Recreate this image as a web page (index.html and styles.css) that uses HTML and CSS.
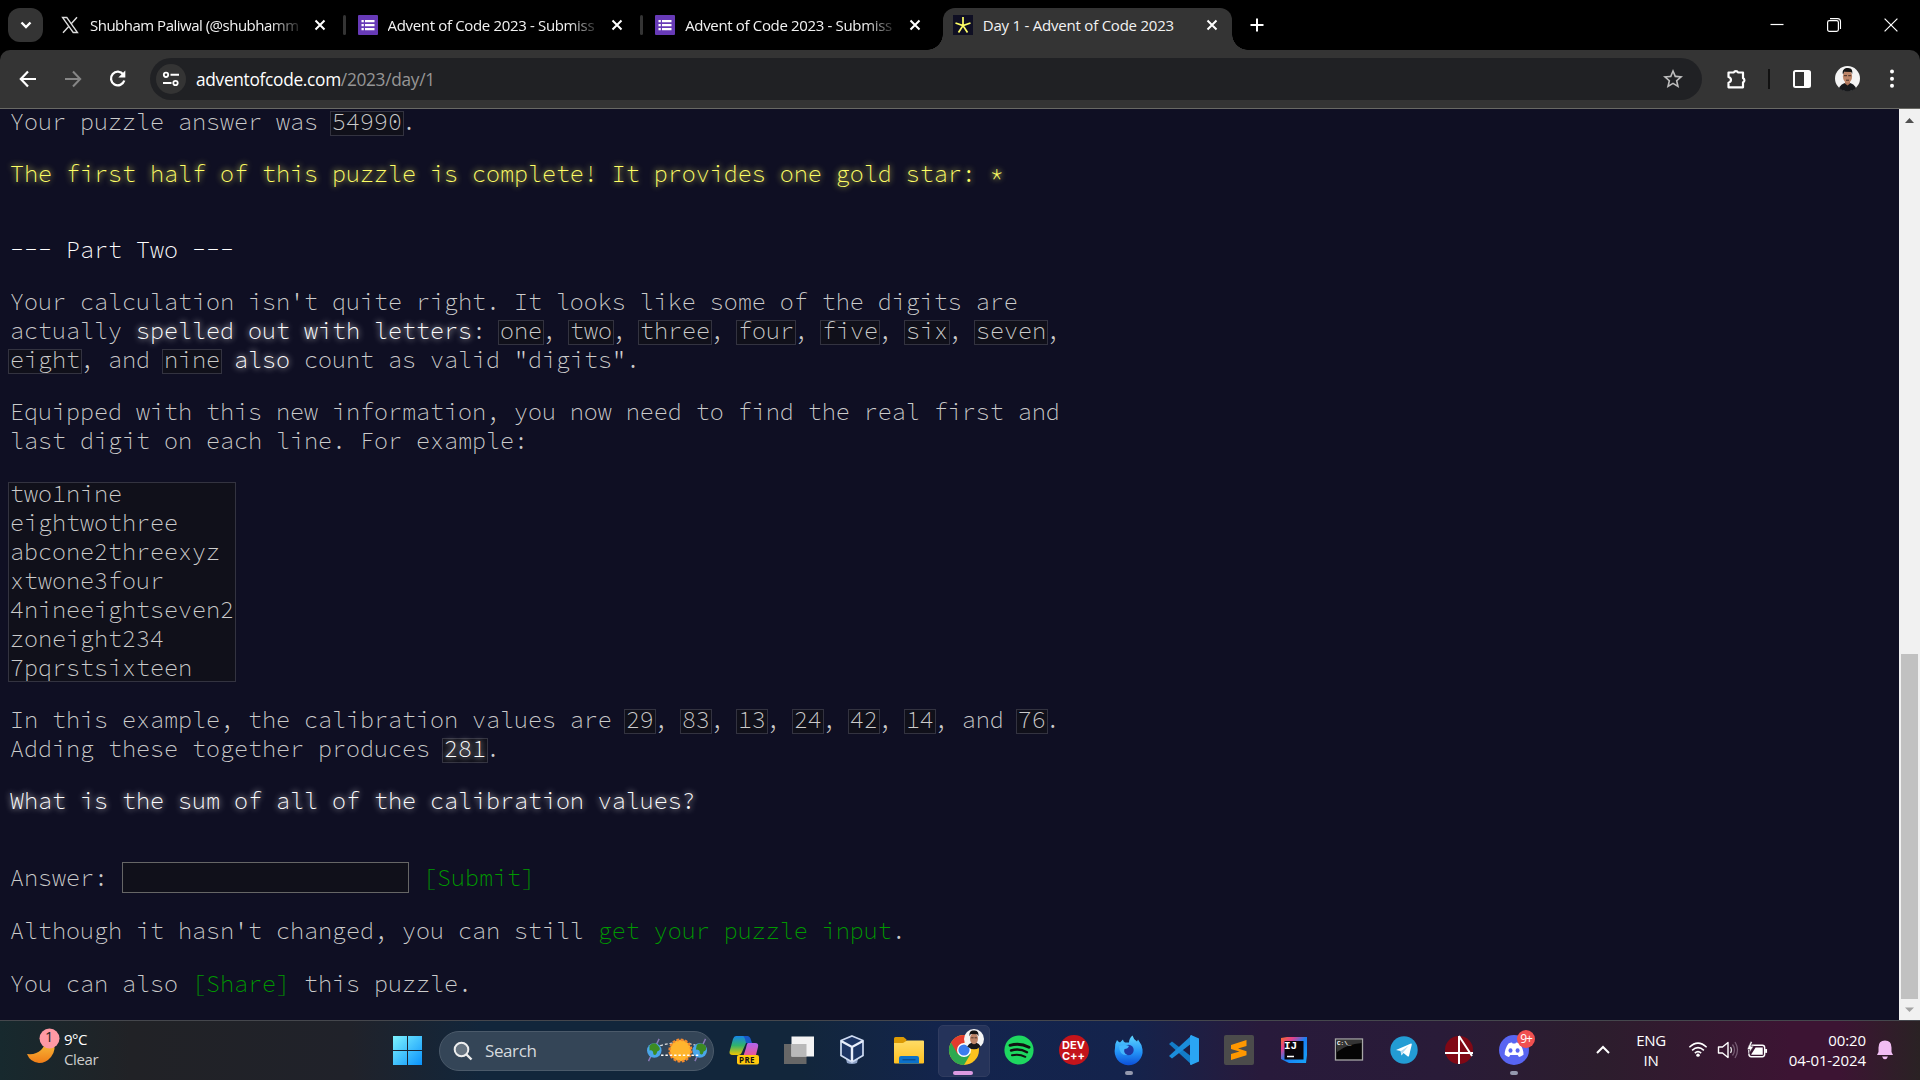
FILE: index.html
```html
<!DOCTYPE html>
<html lang="en">
<head>
<meta charset="utf-8">
<title>Day 1 - Advent of Code 2023</title>
<link rel="stylesheet" href="styles.css">
</head>
<body>
<header class="tabstrip">
  <button class="tab-search"><svg width="14" height="12" viewBox="0 0 14 12"><path d="M2.5 3.5 7 8l4.500-4.500" fill="none" stroke="#fff" stroke-width="2.400"/></svg></button>
  <div class="tab">
    <svg class="favicon" viewBox="0 0 20 20"><path d="M2.500 2.500h4.300l10.700 15h-4.300z" fill="none" stroke="#ddd" stroke-width="1.300"/><path d="M17 2.300 11 9M8.700 11.500 3 17.700" stroke="#ddd" stroke-width="1.400"/></svg>
    <span class="title fade tight">Shubham Paliwal (@shubhamm</span>
    <svg class="close" viewBox="0 0 12 12"><path d="M1.500 1.500l9 9M10.500 1.500l-9 9"/></svg>
  </div>
  <div class="tab sep">
    <svg class="favicon" viewBox="0 0 20 20"><rect width="20" height="20" rx="1" fill="#673ab7"/><path d="M3.500 5h2.300v2.300H3.500zM3.500 9h2.300v2.300H3.500zM3.500 13h2.300v2.300H3.500zM7 5h9.500v2.300H7zM7 9h9.500v2.300H7zM7 13h9.500v2.300H7z" fill="#fff"/></svg>
    <span class="title fade">Advent of Code 2023 - Submiss</span>
    <svg class="close" viewBox="0 0 12 12"><path d="M1.500 1.500l9 9M10.500 1.500l-9 9"/></svg>
  </div>
  <div class="tab sep">
    <svg class="favicon" viewBox="0 0 20 20"><rect width="20" height="20" rx="1" fill="#673ab7"/><path d="M3.500 5h2.300v2.300H3.500zM3.500 9h2.300v2.300H3.500zM3.500 13h2.300v2.300H3.500zM7 5h9.500v2.300H7zM7 9h9.500v2.300H7zM7 13h9.500v2.300H7z" fill="#fff"/></svg>
    <span class="title fade">Advent of Code 2023 - Submiss</span>
    <svg class="close" viewBox="0 0 12 12"><path d="M1.500 1.500l9 9M10.500 1.500l-9 9"/></svg>
  </div>
  <div class="tab active">
    <svg class="favicon" viewBox="0 0 20 20"><rect width="20" height="20" fill="#0f0f23"/><path d="M10 2v8.500M2.500 8 10 10.500 17.500 8M5.500 17.500 10 10.500l4.500 7" fill="none" stroke="#ffff66" stroke-width="1.700"/></svg>
    <span class="title wide">Day 1 - Advent of Code 2023</span>
    <svg class="close" viewBox="0 0 12 12"><path d="M1.500 1.500l9 9M10.500 1.500l-9 9"/></svg>
  </div>
  <svg class="newtab" width="14" height="14" viewBox="0 0 14 14"><path d="M7 .5v13M.5 7h13" stroke="#fff" stroke-width="2"/></svg>
  <div class="window-buttons">
    <svg viewBox="0 0 14 14"><path d="M.5 6.500h13" stroke="#fff" stroke-width="1.200"/></svg>
    <svg viewBox="0 0 14 14"><rect x=".6" y="2.600" width="10.800" height="10.800" rx="1.800" fill="none" stroke="#fff" stroke-width="1.200"/><path d="M3 .6h7.500a3 3 0 0 1 3 3V11" fill="none" stroke="#fff" stroke-width="1.100"/></svg>
    <svg viewBox="0 0 14 14"><path d="M.6.6l12.800 12.800M13.400.6.6 13.400" stroke="#fff" stroke-width="1.200"/></svg>
  </div>
</header>

<nav class="toolbar">
  <svg class="nav" viewBox="0 0 20 20"><path d="M18 10H3M10 2.500 2.800 10l7.200 7.500" fill="none" stroke="#fff" stroke-width="2.200"/></svg>
  <svg class="nav" viewBox="0 0 20 20"><path d="M2 10h15M10 2.500l7.200 7.500-7.200 7.500" fill="none" stroke="#868686" stroke-width="2"/></svg>
  <svg class="nav" viewBox="0 0 20 20"><path d="M15.300 5.500A6.800 6.800 0 1 0 16.300 11.500" fill="none" stroke="#fff" stroke-width="2.300"/><path d="M17.300 1.500v7h-7z" fill="#fff"/></svg>
  <div class="omnibox">
    <span class="site"><svg width="18" height="16" viewBox="0 0 18 16"><circle cx="4" cy="3.800" r="2.200" fill="none" stroke="#fff" stroke-width="1.800"/><circle cx="13.500" cy="12" r="2.200" fill="none" stroke="#fff" stroke-width="1.800"/><path d="M8.500 3.800H17M1 12h8.500" stroke="#fff" stroke-width="1.900"/></svg></span>
    <span class="url"><b>adventofcode.com</b>/2023/day/1</span>
    <svg class="star" viewBox="0 0 24 24"><path d="M22 9.240l-7.190-.62L12 2 9.190 8.630 2 9.240l5.460 4.730L5.820 21 12 17.270 18.180 21l-1.630-7.030zM12 15.400l-3.760 2.270 1-4.280-3.320-2.880 4.380-.38L12 6.100l1.710 4.040 4.380.38-3.320 2.880 1 4.280z" fill="#bdbdbd"/></svg>
  </div>
  <svg class="ext" viewBox="0 0 22 22"><path d="M2.500 4.500h5.300a2.200 1.900 0 0 1 4.200 0h5v5.600a2 2.200 0 0 1 0 4.200v5H2.500v-4.600c3.300-.8 3.300-4.900 0-5.700z" fill="none" stroke="#fff" stroke-width="2.200" stroke-linejoin="round"/></svg>
  <i class="divider"></i>
  <svg class="panel" viewBox="0 0 18 18"><rect x="1" y="1" width="16" height="16" rx="1.500" fill="none" stroke="#fff" stroke-width="2"/><path d="M11 1h6v16h-6z" fill="#fff"/></svg>
  <svg class="avatar" viewBox="0 0 25 25"><circle cx="12.500" cy="12.500" r="12.500" fill="#f4f4f4"/><path d="M4 22q2-4 6-5h5q4 1 6 5a12.500 12.500 0 0 1-17 0z" fill="#17191c"/><path d="M10 13h5v4.500l-2.500 2-2.500-2z" fill="#ad755c"/><ellipse cx="12.500" cy="10.500" rx="4.600" ry="6.300" fill="#bd8568"/><path d="M7.800 8C7 3.500 10 1.800 13 2c4 .3 4.700 2.500 4.200 6l-1-2-7-.3-.9 2.300z" fill="#141414"/><path d="M9 9.700h3M13.200 9.700h3M11 14.200h3" stroke="#35251f" stroke-width=".9"/></svg>
  <svg class="dots" viewBox="0 0 6 22"><circle cx="3" cy="3.500" r="2" fill="#fff"/><circle cx="3" cy="10.800" r="2" fill="#fff"/><circle cx="3" cy="17.800" r="2" fill="#fff"/></svg>
</nav>

<div class="viewport">
<main class="page">
<p>Your puzzle answer was <code>54990</code>.</p>
<p class="gold">The first half of this puzzle is complete! It provides one gold star: *</p>
<h2>--- Part Two ---</h2>
<p>Your calculation isn't quite right. It looks like some of the digits are<br>actually <em>spelled out with letters</em>: <code>one</code>, <code>two</code>, <code>three</code>, <code>four</code>, <code>five</code>, <code>six</code>, <code>seven</code>,<br><code>eight</code>, and <code>nine</code> <em>also</em> count as valid "digits".</p>
<p>Equipped with this new information, you now need to find the real first and<br>last digit on each line. For example:</p>
<pre><span>two1nine
eightwothree
abcone2threexyz
xtwone3four
4nineeightseven2
zoneight234
7pqrstsixteen</span></pre>
<p>In this example, the calibration values are <code>29</code>, <code>83</code>, <code>13</code>, <code>24</code>, <code>42</code>, <code>14</code>, and <code>76</code>.<br>Adding these together produces <code><em>281</em></code>.</p>
<p><em>What is the sum of all of the calibration values?</em></p>
<form class="answer"><label for="answer">Answer:</label><input id="answer" type="text"><a>[Submit]</a></form>
<p class="tail">Although it hasn't changed, you can still <a>get your puzzle input</a>.</p>
<p class="tail">You can also <a>[Share]</a> this puzzle.</p>
</main>
<aside class="scrollbar">
  <svg viewBox="0 0 21 21"><path d="M10.500 9l4.500 5H6z" fill="#505050"/></svg>
  <i class="thumb"></i>
  <svg class="down" viewBox="0 0 21 21"><path d="M10.500 13 15 8.500H6z" fill="#a3a3a3"/></svg>
</aside>
</div>

<footer class="taskbar">
  <div class="weather">
    <svg width="34" height="38" viewBox="0 0 34 38"><defs><linearGradient id="moon" x1="0" y1="0" x2="0" y2="1"><stop offset="0" stop-color="#f8c13c"/><stop offset="1" stop-color="#f07d18"/></linearGradient></defs><path d="M27 13q4 8-2 16-5 6-12 6Q4 34 1 26q9 1 14-4 4-4 4-9z" fill="url(#moon)"/><circle cx="23.500" cy="10.500" r="10" fill="#ff99a4"/></svg><b class="count">1</b>
    <div class="temp">9°C<br><span>Clear</span></div>
  </div>
  <svg class="start" viewBox="0 0 29 29"><defs><linearGradient id="win" x1="0" y1="0" x2="1" y2="1"><stop offset="0" stop-color="#7df3ff"/><stop offset="1" stop-color="#0a92fb"/></linearGradient></defs><path d="M0 0h14v14H0zM15 0h14v14H15zM0 15h14v14H0zM15 15h14v14H15z" fill="url(#win)"/></svg>
  <div class="search">
    <svg width="20" height="20" viewBox="0 0 20 20"><circle cx="8.500" cy="8.500" r="6.800" fill="#667380" stroke="#eee" stroke-width="2"/><path d="M13.500 13.500l5 5" stroke="#eee" stroke-width="2.400"/></svg>
    <span>Search</span>
    <svg class="earths" viewBox="0 0 64 30"><path d="M13 3 2 26M61 3 50 26" stroke="#8a79b8" stroke-width="1.500"/><path d="M14 10q20-6 38 0" fill="none" stroke="#ddd" stroke-width="1.200" stroke-dasharray="3 2"/><circle cx="8" cy="15" r="7.500" fill="#4aa6ea"/><circle cx="55" cy="15" r="7.500" fill="#4aa6ea"/><path d="M3 10q5-5 9 0 4 4-1 6-1 5-4 3 0-5-4-4zM52 9q5-3 9 1 2 5-2 6-1 5-4 2 1-4-4-4z" fill="#3d8b22"/><circle cx="35" cy="15" r="11" fill="#ffb52e"/><circle cx="35" cy="15" r="11.200" fill="none" stroke="#f48a2e" stroke-width="2.500" stroke-dasharray="2.800 1.600"/><path d="M15 20h40" stroke="#fff" stroke-width="1.500" stroke-dasharray="2.500 2"/></svg>
  </div>
  <div class="apps">
    <span class="app"><svg viewBox="0 0 30 30"><defs><linearGradient id="cpa" x1="0" y1="0" x2="0" y2="1"><stop offset="0" stop-color="#1686e8"/><stop offset=".5" stop-color="#31b36b"/><stop offset="1" stop-color="#f3c700"/></linearGradient><linearGradient id="cpb" x1="0" y1="0" x2="0" y2="1"><stop offset="0" stop-color="#b065f0"/><stop offset="1" stop-color="#f4558a"/></linearGradient></defs><path d="M7 1h10q3 0 4 4l1 3h-5l-4 9q-1 3-4 3H4q-5 0-3-5L4 4q1-3 3-3z" fill="url(#cpa)"/><path d="M14 1h4q3 0 4 4l1 3h-6l-1-4q-1-3-2-3z" fill="#1859c9"/><path d="M19 8h7q4 0 3 4l-2 8-7 2h-6l3-9q1-5 2-5z" fill="url(#cpb)"/><rect x="8" y="20" width="22" height="9.500" rx="2" fill="#ffc90e"/></svg><b class="pre">PRE</b></span>
    <span class="app"><svg viewBox="0 0 30 30"><rect x="0" y="9" width="22.500" height="20" fill="#676767"/><rect x="7.500" y="1.500" width="22.500" height="20" fill="#f3f3f3"/><path d="M7.500 9h15v12.500h-15z" fill="#b9b9b9"/></svg></span>
    <span class="app vbox"><svg viewBox="0 0 30 30"><path d="M9 24h12l-1 4q-5 2-10 0z" fill="#8fa3c8"/><path d="M15 1 26 5.500v15L15 27 4 20.500v-15z" fill="#1d3564" stroke="#cfdcf3" stroke-width="1.700"/><path d="M4 6l11 6 11-6M15 12v14" fill="none" stroke="#e8eefb" stroke-width="2.400"/></svg></span>
    <span class="app"><svg viewBox="0 0 30 30"><defs><linearGradient id="fold" x1="0" y1="0" x2="0" y2="1"><stop offset="0" stop-color="#ffdc66"/><stop offset="1" stop-color="#ffc021"/></linearGradient></defs><path d="M0 3.500q0-1.500 1.500-1.500h8l3 2.500V10H0z" fill="#dc9a04"/><path d="M0 8h9l4-2.500h16q1 0 1 1V27.500q0 1-1 1H1q-1 0-1-1z" fill="url(#fold)"/><path d="M5 28.500V23q0-2 2-2h16q2 0 2 2v5.500z" fill="#0c72ca"/><path d="M8.500 24.700h13" stroke="#094f93" stroke-width="1.400"/></svg></span>
    <span class="app current"><svg viewBox="0 0 30 30"><circle cx="15" cy="15" r="15" fill="#fcc31e"/><path d="M15 15 2 7.500A15 15 0 0 0 15 30l6.500-11z" fill="#2da94f"/><path d="M2 7.500A15 15 0 0 1 28 7.500H15V15L8.500 18.700z" fill="#e33b2e"/><circle cx="15" cy="15" r="7" fill="#fff"/><circle cx="15" cy="15" r="5.600" fill="#3b7ded"/></svg><svg class="mini" viewBox="0 0 25 25"><circle cx="12.500" cy="12.500" r="12.500" fill="#f4f4f4"/><path d="M4 22q2-4 6-5h5q4 1 6 5a12.500 12.500 0 0 1-17 0z" fill="#17191c"/><ellipse cx="12.500" cy="12" rx="5" ry="7" fill="#bd8568"/><path d="M7 9C6 3.500 9 1.500 13.500 2c4 .3 5 3.500 4.500 7l-1.500-2.500-8-.3z" fill="#141414"/><path d="M9 11h3M13.200 11h3" stroke="#35251f"/></svg></span>
    <span class="app"><svg viewBox="0 0 30 30"><circle cx="15" cy="15" r="14.600" fill="#1ed760"/><path d="M6 10.300q10-3 19 2" fill="none" stroke="#111" stroke-width="2.900" stroke-linecap="round"/><path d="M7 15.500q8.500-2.500 16 1.700" fill="none" stroke="#111" stroke-width="2.400" stroke-linecap="round"/><path d="M8 20.300q7-1.800 13.300 1.500" fill="none" stroke="#111" stroke-width="2" stroke-linecap="round"/></svg></span>
    <span class="app"><svg viewBox="0 0 30 30"><circle cx="15" cy="15" r="15" fill="#c4141b"/></svg><b class="dev">DEV<br>C++</b></span>
    <span class="app open"><svg viewBox="0 0 30 30"><defs><linearGradient id="ff" x1="0" y1="0" x2="0" y2="1"><stop offset="0" stop-color="#5fd6ff"/><stop offset=".55" stop-color="#2495f7"/><stop offset="1" stop-color="#0c4fd8"/></linearGradient></defs><path d="M3 5q1 1.500 3 2.500l3-3q0 2 2 3l4 0q0-4 3.500-7 1 4 4.500 6l1-2q4 5 4.500 10A14 14 0 1 1 1 13Q1 8 3 5z" fill="url(#ff)"/><circle cx="14.500" cy="15" r="5.200" fill="#20379e"/><path d="M5 11q6-2 10 0-1 3-4.500 3-1.500 4 3 6-8 1-8.500-9z" fill="#43b7fd"/></svg></span>
    <span class="app"><svg viewBox="0 0 30 30"><path d="M0 9l3-2.500L23 22v8z" fill="#137cc7"/><path d="M0 21l3 2.500L23 8V0z" fill="#1b8ddb"/><path d="M22 0l8 3.500v23L22 30q-1 0-1-1V1z" fill="#2aa5f3"/></svg></span>
    <span class="app"><svg viewBox="0 0 30 30"><rect width="30" height="30" rx="2" fill="#4b4b4b"/><path d="M7 10l15.500-5v6L14 13.500l8.500 2.700v4L7 25v-6l8.500-2.500L7 14z" fill="#ff9800"/></svg></span>
    <span class="app"><svg viewBox="0 0 30 30"><defs><linearGradient id="ij" x1="0" y1="0" x2="1" y2="1"><stop offset="0" stop-color="#fc6a2a"/><stop offset=".25" stop-color="#e0418f"/><stop offset=".5" stop-color="#1980f5"/><stop offset="1" stop-color="#16a4f8"/></linearGradient></defs><path d="M2 3l6-1h20v18l-1 8H10l-8-4z" fill="url(#ij)"/><path d="M5.500 6h19v18.500h-19z" fill="#08050b"/><path d="M8 21.500h7" stroke="#fff" stroke-width="1.500"/></svg><b class="ij">IJ</b></span>
    <span class="app"><svg viewBox="0 0 30 30"><rect x="1.500" y="4" width="27" height="21" fill="#050505" stroke="#a7a7a7" stroke-width="1.300"/><path d="M2 5h26v3q-15 1-25 9z" fill="#343434"/></svg><b class="cmd">C:\_</b></span>
    <span class="app"><svg viewBox="0 0 30 30"><circle cx="15" cy="15" r="13.700" fill="#239cd4"/><path d="M7 15 22 8.500q1 0 .8 1L20 21q-.5 1-1.500.3L14.500 18l-2 2.500-1-4.500z" fill="#fff"/><path d="M12 16l7.500-5-5.500 6.500-1.500 2.500z" fill="#b4d9ee"/></svg></span>
    <span class="app"><svg viewBox="0 0 30 30"><circle cx="15" cy="15" r="14" fill="#800815"/><path d="M15 1v28M1 18h28M15 1l13 20" stroke="#fff" stroke-width="2"/></svg></span>
    <span class="app open"><svg viewBox="0 0 30 30"><circle cx="15" cy="15" r="15" fill="#5865f2"/><path d="M9.500 8.500q2-1 3.500-1l.6 1h2.800l.6-1q2 0 3.800 1 4 6 3.700 11.300Q22 21.700 20 22l-1.300-2h-7.400L10 22q-2-.3-4.300-2.200Q5.500 14 9.500 8.500z" fill="#fff"/><ellipse cx="11.500" cy="15.500" rx="2" ry="2.200" fill="#5865f2"/><ellipse cx="18.600" cy="15.500" rx="2" ry="2.200" fill="#5865f2"/></svg><b class="badge">9+</b></span>
  </div>
  <div class="tray">
    <svg class="chev" viewBox="0 0 16 10"><path d="M2 8l6-6 6 6" fill="none" stroke="#fff" stroke-width="2"/></svg>
    <div class="lang">ENG<br>IN</div>
    <svg class="wifi" viewBox="0 0 22 18"><path d="M1.500 6.500q9.500-9 19 0M4.500 10q6.500-6 13 0M7.500 13q3.500-3.200 7 0" fill="none" stroke="#fff" stroke-width="1.700"/><circle cx="11" cy="15.200" r="1.900" fill="#fff"/></svg>
    <svg class="sound" viewBox="0 0 22 20"><path d="M1.500 7h4l5.500-4.500v15L5.500 13h-4z" fill="none" stroke="#fff" stroke-width="1.400" stroke-linejoin="round"/><path d="M13.500 7q2 3 0 6" fill="none" stroke="#ddd" stroke-width="1.300"/><path d="M15.500 4.500q4 5.500 0 11M18 2q5 8 0 16" fill="none" stroke="#765c73" stroke-width="1.300"/></svg>
    <svg class="battery" viewBox="0 0 22 18"><rect x="2" y="4" width="16.500" height="12" rx="2.500" fill="none" stroke="#fff" stroke-width="1.500"/><path d="M4.500 13.500 9 6.500h7.500V14h-12z" fill="#fff"/><path d="M19 8h2v4h-2z" fill="#fff"/><path d="M4-.5 0 8.500h3L2 13l5-8H4l1.500-4z" fill="#fff" stroke="#31162f" stroke-width=".6"/></svg>
    <div class="clock">00:20<br>04-01-2024</div>
    <svg class="bell" viewBox="0 0 18 20"><path d="M9 .5q6.500 0 6.500 7V12l1.500 3H1l1.500-3V7.500q0-7 6.500-7z" fill="#f1bdf3"/><path d="M6 16.500h6q-1 2.700-3 2.700t-3-2.700z" fill="#f1bdf3"/></svg>
  </div>
</footer>
</body>
</html>
```
FILE: styles.css
```css
* { box-sizing: border-box; }
body {
  margin: 0;
  width: 1920px;
  height: 1080px;
  overflow: hidden;
  display: flex;
  flex-direction: column;
  background: #000;
  color: #fff;
  font-family: "Open Sans", "Noto Sans", sans-serif;
}
svg { display: block; flex: none; overflow: visible; }

/* tab strip */
.tabstrip { display: flex; height: 50px; padding-left: 8px; align-items: flex-start; background: #000; }
.tab-search { width: 35px; height: 34px; margin: 8px 7px 0 0; padding: 0; border: 0; border-radius: 12px; background: #343434; display: grid; place-items: center; flex: none; }
.tab { position: relative; display: flex; align-items: center; width: 297.600px; height: 50px; padding-left: 10px; flex: none; }
.favicon { width: 20px; height: 20px; }
.title { width: 210px; margin-left: 10px; padding-bottom: 1px; font-size: 15px; letter-spacing: -.34px; line-height: 20px; white-space: nowrap; color: #f2f2f2; }
.title.fade { -webkit-mask-image: linear-gradient(90deg, #000 180px, transparent 214px); mask-image: linear-gradient(90deg, #000 180px, transparent 214px); }
.title.tight { letter-spacing: -.5px; }
.title.wide { letter-spacing: -.22px; }
.close { width: 12px; height: 12px; margin-left: 13.500px; }
.close path { fill: none; stroke: #fff; stroke-width: 2; }
.sep::before { content: ""; position: absolute; left: -5px; top: 15px; width: 3px; height: 20px; border-radius: 2px; background: #343434; }
.active { width: 289px; height: 42px; margin-top: 8px; padding-bottom: 8px; border-radius: 12px 12px 0 0; background: #343434; }
.active::before, .active::after { content: ""; position: absolute; bottom: 0; width: 16px; height: 16px; }
.active::before { left: -16px; background: radial-gradient(circle at 0 0, #000 15.500px, #343434 16px); }
.active::after { right: -16px; background: radial-gradient(circle at 100% 0, #000 15.500px, #343434 16px); }
.newtab { margin: 18px 0 0 18px; }
.window-buttons { display: flex; gap: 43px; margin: 18px 22px 0 auto; }
.window-buttons svg { width: 14px; height: 14px; }

/* toolbar */
.toolbar { display: flex; align-items: center; height: 59px; padding: 0 25px 1px 18px; border-bottom: 1px solid #696964; border-radius: 10px 10px 0 0; background: #343434; flex: none; }
.nav { width: 20px; height: 20px; margin-right: 25px; }
.omnibox { display: flex; align-items: center; width: 1552px; height: 42px; margin-left: -3px; padding: 0 17px 0 6px; border-radius: 21px; background: #202124; flex: none; }
.site { width: 30px; height: 30px; border-radius: 50%; background: #343434; display: grid; place-items: center; }
.url { margin-left: 10px; padding-top: 1px; font-size: 17.300px; letter-spacing: -.3px; color: #969696; }
.url b { font-weight: 400; color: #fff; }
.star { width: 24px; height: 24px; margin-left: auto; }
.ext { width: 22px; height: 22px; margin-left: 24px; }
.divider { width: 2px; height: 20px; margin-left: 20px; background: #111; }
.panel { width: 18px; height: 18px; margin-left: 23px; }
.avatar { width: 25px; height: 25px; margin-left: 24px; }
.dots { width: 6px; height: 22px; margin-left: auto; }

/* puzzle page */
.viewport { display: flex; height: 911px; background: #0f0f23; flex: none; overflow: hidden; }
.page { flex: 1; padding-left: 10px; font-family: "Source Code Pro", "Noto Sans Mono CJK SC", "Liberation Mono", monospace; font-size: 23.330px; font-weight: 300; line-height: 29px; color: #ccc; white-space: nowrap; }
.page p, .page h2, .page pre { margin: 0 0 23px; font: inherit; }
.page p:first-child { margin-top: -2px; }
.page h2 { margin-top: 47px; color: #fff; }
.page em { font-style: normal; color: #fff; text-shadow: 0 0 6px #fff; }
.page .gold { color: #ffff66; text-shadow: 0 0 6px #ffff66; }
.page code { display: inline-block; height: 25px; margin: -2px; padding: 0 1px 4px; border: 1px solid #333340; font: inherit; line-height: 19px; background: #10101a; }
.page pre { width: 228px; height: 200px; margin: 27px 0 23px -2px; padding: 0 1px; border: 1px solid #333340; background: #10101a; }
.page pre span { display: block; margin-top: -4px; }
.page a { color: #009900; }
.answer { display: flex; align-items: center; margin: 47px 0 23px; height: 31px; }
.answer label { width: 112px; }
.answer input { width: 287px; height: 31px; margin: 0 14px 0 0; border: 1px solid #666; background: #10101a; }
.page .tail { margin-bottom: 24px; }

.scrollbar { display: flex; flex-direction: column; width: 21px; background: #f1f1f1; }
.scrollbar svg { width: 21px; height: 21px; }
.thumb { width: 17px; height: 346px; margin: 524px 2px 0; background: #c1c1c1; }
.scrollbar .down { margin-top: auto; }

/* taskbar */
.taskbar { display: flex; align-items: center; height: 60px; border-top: 1px solid #45474d; flex: none;
  background: linear-gradient(90deg, #17292e 0, #212226 130px, #20222a 350px, #12263b 480px, #12263b 800px, #13244d 950px, #14234c 1130px, #281a3b 1260px, #291b38 1440px, #2c1d2d 1600px, #3c1433 1790px, #3c1433 1840px, #2a2224 1920px); }
.weather { position: relative; display: flex; width: 393px; padding: 0 0 3px 26px; align-items: center; flex: none; }
.weather svg { margin-top: -5px; }
.count { position: absolute; left: 45px; top: -1px; font-size: 14.500px; font-weight: 400; color: #222; line-height: 18px; }
.temp { margin-left: 4px; font-size: 15px; line-height: 20px; letter-spacing: -.5px; }
.temp span { color: #ccc; letter-spacing: -.4px; }
.start { width: 29px; height: 29px; }
.search { display: flex; align-items: center; width: 275px; height: 40px; margin-left: 17px; padding: 0 4px 0 13px; border: 1px solid #4b5a6a; border-radius: 20px; background: #344557; font-size: 17px; color: #d6dade; flex: none; }
.search span { margin-left: 12px; letter-spacing: -.4px; }
.earths { width: 63px; height: 29px; margin-left: auto; }
.apps { display: flex; margin-left: 2px; padding-bottom: 1px; }
.app { position: relative; display: grid; place-items: center; width: 55px; height: 60px; flex: none; }
.app > svg { width: 30px; height: 30px; }
.app.vbox { padding-right: 3px; }
.app b { position: absolute; line-height: 1; color: #fff; }
.current::before { content: ""; position: absolute; left: 2px; top: 5px; width: 50px; height: 50px; border: 1px solid #303c60; border-radius: 5px; background: #25335a; }
.current > svg { position: relative; }
.current::after, .open::after { content: ""; position: absolute; left: 24px; bottom: 5px; width: 8px; height: 4px; border-radius: 2px; background: #9499ae; }
.current::after { left: 17px; width: 20px; background: #dc9be2; }
.current > .mini { position: absolute; left: 28px; top: 9px; width: 20px; height: 20px; }
.app .pre { left: 23px; top: 36px; font-size: 8px; color: #111; letter-spacing: .4px; }
.app .dev { left: 0; top: 20px; width: 55px; text-align: center; font: 700 11px/11px "Inter", sans-serif; }
.app .ij { left: 18px; top: 21px; font: 700 11px/11px "Liberation Mono", monospace; }
.app .cmd { left: 16px; top: 21px; font: 700 6px/6px "Liberation Mono", monospace; }
.app .badge { left: 31px; top: 10px; width: 18px; height: 18px; border-radius: 50%; background: #f05050; font-size: 12px; line-height: 17px; font-weight: 400; text-align: center; letter-spacing: -1px; }
.tray { display: flex; align-items: center; flex: 1; padding-bottom: 2px; font-size: 15px; line-height: 20px; letter-spacing: -.3px; }
.chev { width: 16px; height: 10px; margin-left: 54px; }
.lang { width: 34px; margin-left: 23px; text-align: center; }
.wifi { width: 20px; height: 17px; margin-left: 20px; }
.sound { width: 22px; height: 20px; margin-left: 9px; }
.battery { width: 21px; height: 18px; margin-left: 8px; }
.clock { width: 80px; margin-left: 18px; text-align: right; letter-spacing: -.1px; white-space: nowrap; }
.bell { width: 18px; height: 20px; margin-left: 10px; }
```
